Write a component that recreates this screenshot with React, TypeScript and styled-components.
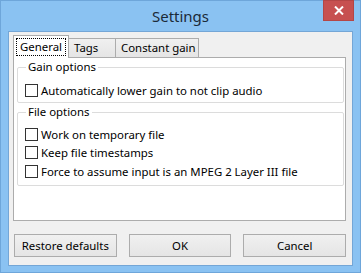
import styled, { createGlobalStyle } from "styled-components";

const Global = createGlobalStyle`
  html, body {
    margin: 0;
    padding: 0;
    background: #8ac2f2;
  }
  body {
    font-family: "Noto Sans", "Open Sans", sans-serif;
    font-size: 11.4px;
    color: #000;
  }
`;

const Window = styled.div`
  width: 361px;
  height: 273px;
  box-sizing: border-box;
  background: #8ac2f2;
  border: 1px solid #6ea6da;
  display: flex;
  flex-direction: column;
`;

const TitleBar = styled.div`
  height: 30px;
  position: relative;
  display: flex;
  align-items: center;
  justify-content: center;
  font-size: 15px;
  color: #1b2a38;
`;

const CloseButton = styled.div`
  position: absolute;
  top: -1px;
  right: 6px;
  width: 31px;
  height: 21px;
  background: #c75050;
  border: 1px solid #b44646;
  box-sizing: border-box;
  display: flex;
  align-items: center;
  justify-content: center;
`;

const Client = styled.div`
  margin: 0 7px 6px 7px;
  flex: 1;
  background: #f0f0f0;
  border: 1px solid #74a6d6;
  padding: 4px 6px 0 4px;
  display: flex;
  flex-direction: column;
`;

const TabStrip = styled.div`
  display: flex;
  align-items: flex-end;
  height: 22px;
  position: relative;
  z-index: 1;
  margin-bottom: -1px;
`;

const Tab = styled.div<{ $active?: boolean; $w: number }>`
  box-sizing: border-box;
  width: ${(p) => p.$w}px;
  height: ${(p) => (p.$active ? "23px" : "20px")};
  padding: ${(p) => (p.$active ? "2px 2px 0" : "0 5px")};
  margin-left: ${(p) => (p.$active ? "0" : "-1px")};
  border: 1px solid #acacac;
  border-bottom: ${(p) => (p.$active ? "none" : "1px solid #acacac")};
  background: ${(p) => (p.$active ? "#fff" : "linear-gradient(#f0f0f0, #e5e5e5)")};
  display: flex;
  align-items: ${(p) => (p.$active ? "flex-start" : "center")};
  line-height: 16px;
  white-space: nowrap;
  &:first-child {
    margin-left: 0;
  }
`;

const Focus = styled.span`
  border: 1px dotted #000;
  padding: 1px 3px;
  flex: 1;
  height: 18px;
  box-sizing: border-box;
  display: flex;
  align-items: center;
`;

const Panel = styled.div`
  height: 164px;
  box-sizing: border-box;
  background: #fff;
  border: 1px solid #acacac;
  padding: 1px 1px 0 3px;
  display: flex;
  flex-direction: column;
  gap: 1px;
`;

const Group = styled.fieldset<{ $rows: number }>`
  margin: 0;
  padding: 0 0 0 7px;
  border: 1px solid #dcdcdc;
  border-radius: 2px;
  height: ${(p) => p.$rows}px;
  box-sizing: border-box;
  display: flex;
  flex-direction: column;
`;

const Legend = styled.legend`
  padding: 0 2px;
  margin-left: 1px;
  line-height: 16px;
`;

const Row = styled.label<{ $top?: number }>`
  display: flex;
  align-items: center;
  height: 18.5px;
  gap: 3px;
  white-space: nowrap;
  margin-top: ${(p) => p.$top ?? 0}px;
`;

const Box = styled.span`
  width: 13px;
  height: 13px;
  box-sizing: border-box;
  border: 1px solid #333;
  background: #fff;
  flex: none;
`;

const Buttons = styled.div`
  display: flex;
  gap: 12px;
  margin: 13px 0 0 1px;
`;

const Button = styled.div`
  width: 104px;
  height: 23px;
  box-sizing: border-box;
  border: 1px solid #acacac;
  background: linear-gradient(#f0f0f0, #e5e5e5);
  display: flex;
  align-items: center;
  justify-content: center;
`;

const Check = ({ text, top }: { text: string; top?: number }) => (
  <Row $top={top}>
    <Box />
    <span>{text}</span>
  </Row>
);

export default function App() {
  return (
    <>
      <Global />
      <Window>
        <TitleBar>
          Settings
          <CloseButton>
            <svg width="10" height="9" viewBox="0 0 10 9">
              <path d="M1 0.5 L9 8.5 M9 0.5 L1 8.5" stroke="#fff" strokeWidth="2" />
            </svg>
          </CloseButton>
        </TitleBar>
        <Client>
          <TabStrip>
            <Tab $active $w={56}>
              <Focus>General</Focus>
            </Tab>
            <Tab $w={48}>Tags</Tab>
            <Tab $w={84}>Constant gain</Tab>
          </TabStrip>
          <Panel>
            <Group $rows={44}>
              <Legend>Gain options</Legend>
              <Check top={6} text="Automatically lower gain to not clip audio" />
            </Group>
            <Group $rows={82}>
              <Legend>File options</Legend>
              <Check top={5} text="Work on temporary file" />
              <Check text="Keep file timestamps" />
              <Check text="Force to assume input is an MPEG 2 Layer III file" />
            </Group>
          </Panel>
          <Buttons>
            <Button>Restore defaults</Button>
            <Button>OK</Button>
            <Button>Cancel</Button>
          </Buttons>
        </Client>
      </Window>
    </>
  );
}
